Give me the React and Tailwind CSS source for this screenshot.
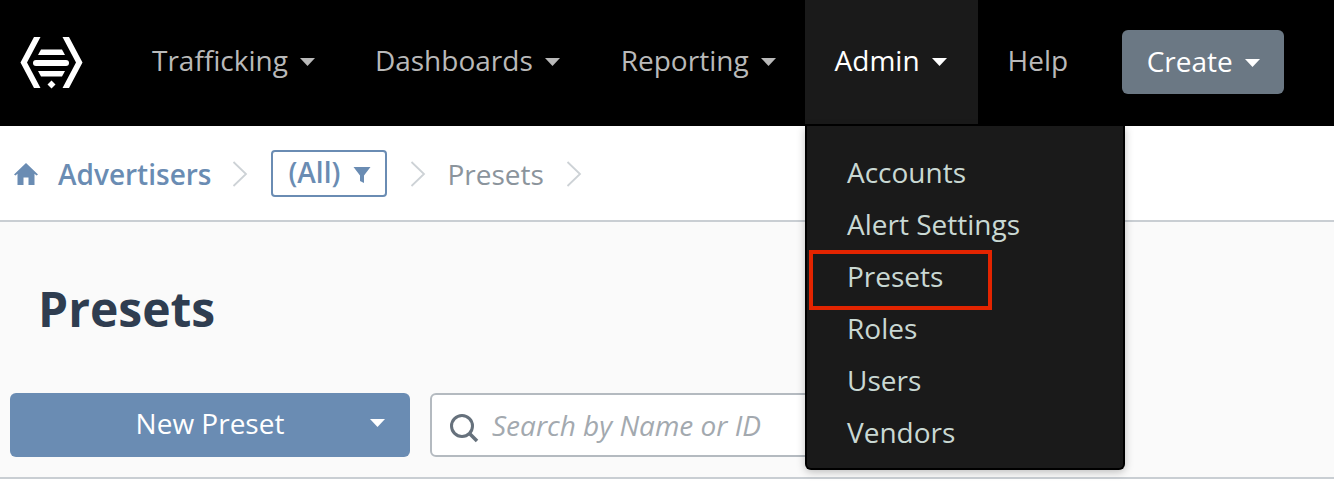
import React from "react";

const font = { fontFamily: '"Open Sans", sans-serif' };

function Caret({ className = "" }) {
  return (
    <svg width="15" height="8" viewBox="0 0 15 8" className={className} aria-hidden="true">
      <path d="M0 0H15L7.5 8Z" fill="currentColor" />
    </svg>
  );
}

function Logo() {
  return (
    <svg width="64" height="54" viewBox="0 0 64 54" className="shrink-0 -mt-0.5" aria-hidden="true">
      <g fill="#fff" transform="translate(-19,-34)">
        <path d="M34 36H40.5L27 61.5L40.5 87H34L20.5 61.5Z" />
        <path d="M69 36H62.500L76 61.500L62.500 87H69L82.500 61.500Z" />
        <path d="M41 48.500H62L65 54H38Z" />
        <rect x="33" y="59" width="36" height="6" rx="3" />
        <path d="M38 70H65L62 75.500H41Z" />
        <path d="M51.500 79.500L55.500 83.500L51.500 87.500L47.500 83.500Z" />
      </g>
    </svg>
  );
}

function Chevron({ className = "" }) {
  return (
    <svg width="16" height="26" viewBox="0 0 16 26" className={`mt-0.5 ${className}`} aria-hidden="true">
      <path d="M1.500 1L14 13L1.500 25" fill="none" stroke="#cdd2d6" strokeWidth="1.800" />
    </svg>
  );
}

function NavItem({ label, active, caret = true, className = "" }) {
  return (
    <div
      className={`flex h-[124px] self-start items-center pb-1 text-[28px] ${className} ${
        active ? "bg-[#1a1a1a] text-white" : "text-[#b9b9b9]"
      }`}
    >
      <span>{label}</span>
      {caret && <Caret className="ml-3 mt-1" />}
    </div>
  );
}

const items = ["Accounts", "Alert Settings", "Presets", "Roles", "Users", "Vendors"];

export default function App() {
  return (
    <div className="relative h-[496px] w-[1334px] overflow-hidden bg-white" style={font}>
      <header className="flex h-[126px] items-center bg-black pl-[19px]">
        <Logo />
        <div className="ml-[39px] flex h-full items-start">
          <NavItem label="Trafficking" className="px-[30px]" />
          <NavItem label="Dashboards" className="px-[30px]" />
          <NavItem label="Reporting" className="pl-[31px] pr-[29px]" />
          <NavItem label="Admin" active className="pl-[30px] pr-[31px]" />
          <NavItem label="Help" caret={false} className="px-[30px]" />
        </div>
        <button className="ml-6 -mt-0.5 flex h-16 w-[162px] items-center justify-center rounded-md bg-[#6b7884] pb-0.5 text-[28px] text-white">
          Create
          <Caret className="ml-3 mt-1" />
        </button>
      </header>

      <nav className="flex h-24 items-center border-b-2 border-[#c9ced3] pl-[13px] text-[28px]">
        <svg width="26" height="24" viewBox="0 0 26 24" className="mt-0.5" aria-hidden="true">
          <path
            d="M13 1L1 12.500L2.500 13.500L4.500 11.800V23H10.500V15.500H15.500V23H21.500V11.800L23.500 13.500L25 12.500Z"
            fill="#6a8cb3"
          />
        </svg>
        <span className="ml-[19px] mt-0.5 font-semibold text-[#6a8cb3]">Advertisers</span>
        <Chevron className="ml-[21px]" />
        <div className="ml-[23px] flex h-[47px] w-[116px] items-center rounded border-2 border-[#6a8cb3] pl-[15px] font-semibold text-[#6a8cb3]">
          <span className="-mt-0.5">(All)</span>
          <svg width="18" height="18" viewBox="0 0 18 18" className="ml-[13px] mt-1" aria-hidden="true">
            <path d="M0.500 1H17.500L11 9.500V17L7 15V9.500Z" fill="#6a8cb3" />
          </svg>
        </div>
        <Chevron className="ml-[23px]" />
        <span className="ml-[21px] mt-0.5 text-[#8b949c]">Presets</span>
        <Chevron className="ml-[22px]" />
      </nav>

      <main className="h-[257px] border-b-2 border-[#c9ced3] bg-[#fafafa] pl-[10px]">
        <h1 className="ml-[28px] pt-[54px] text-[48px] leading-[66px] font-bold text-[#2f3d50]">Presets</h1>
        <div className="mt-[51px] flex">
          <button className="relative flex h-16 w-[400px] items-center justify-center rounded-md bg-[#6a8cb3] pb-1 text-[28px] text-white">
            New Preset
            <Caret className="absolute right-[25px] top-[26px]" />
          </button>
          <div className="ml-5 flex h-[64px] w-[480px] items-center rounded-md border-2 border-[#b4bac0] bg-white pl-[18px]">
            <svg width="30" height="30" viewBox="0 0 30 30" className="mt-2" aria-hidden="true">
              <circle cx="12" cy="12" r="10.500" fill="none" stroke="#66717c" strokeWidth="3" />
              <path d="M20 20L27 27" stroke="#66717c" strokeWidth="3.500" />
            </svg>
            <span className="ml-3 text-[28px] text-[#a3a9af] italic">Search by Name or ID</span>
          </div>
        </div>
      </main>

      <div className="absolute left-[805px] top-[126px] h-[344px] w-[320px] rounded-b-md border-x-2 border-b-2 border-black bg-[#1a1a1a] pt-5 shadow-[0_2px_8px_rgba(0,0,0,0.25)]">
        {items.map((item) => (
          <div key={item} className="h-[52px] pl-[40px] text-[28px] leading-[52px] text-[#c9d8d3]">
            {item}
          </div>
        ))}
        <div className="absolute left-[2px] top-[124px] h-[60px] w-[183px] border-4 border-[#e32400]" />
      </div>
    </div>
  );
}
